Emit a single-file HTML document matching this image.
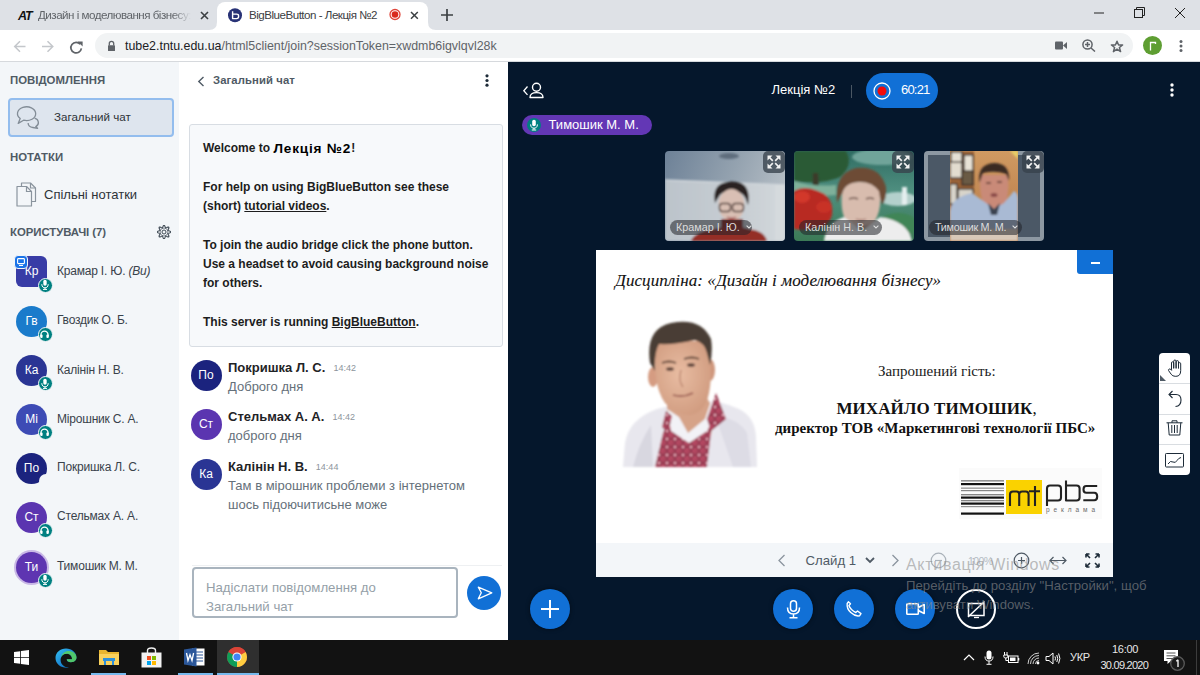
<!DOCTYPE html>
<html><head><meta charset="utf-8">
<style>
*{margin:0;padding:0;box-sizing:border-box}
html,body{width:1200px;height:675px;overflow:hidden;font-family:"Liberation Sans",sans-serif;background:#fff}
.a{position:absolute}
svg{display:block;position:absolute}
.nw{white-space:nowrap}
.sec{font-size:11.4px;font-weight:bold;color:#4f5a65;white-space:nowrap;line-height:14px}
.uname{font-size:12px;letter-spacing:-0.2px;color:#39424b;white-space:nowrap;line-height:14px}
.av{position:absolute;width:31px;height:31px;border-radius:50%;color:#fff;font-size:12px;text-align:center;line-height:31px}
.badge{position:absolute;width:15px;height:15px;border-radius:50%;background:#008081;border:1.5px solid #f3f6f9}
.wel{position:absolute;left:203px;font-size:12px;font-weight:bold;color:#1d1d1d;white-space:nowrap;line-height:14px}
.mname{position:absolute;left:228px;font-size:13px;font-weight:bold;color:#1f2326;white-space:nowrap;line-height:15px}
.mtime{font-size:9px;font-weight:normal;color:#8d959d;margin-left:2px;position:relative;top:-1px}
.mtxt{position:absolute;left:228px;font-size:13px;color:#65707a;white-space:nowrap;line-height:15px}
.tile{position:absolute;top:151px;width:120px;height:90px;border-radius:4px;overflow:hidden}
.exp{position:absolute;right:0;top:0;width:22px;height:22px;border-radius:5px;background:rgba(55,65,75,.78)}
.tname{position:absolute;left:5px;top:69px;height:15px;border-radius:8px;background:rgba(32,34,40,.55);color:#dcdcdc;font-size:10.8px;line-height:15px;padding:0 6px;white-space:nowrap}
.abtn{position:absolute;top:589px;width:40px;height:40px;border-radius:50%;background:#1170d6;box-shadow:0 0 4px rgba(0,0,0,.5)}
</style></head><body>

<!-- ============ TAB STRIP ============ -->
<div class="a" style="left:0;top:0;width:1200px;height:30px;background:#dee1e6"></div>
<div class="a" style="left:217px;top:2px;width:211px;height:29px;background:#fff;border-radius:8px 8px 0 0"></div>
<svg style="left:209px;top:22px" width="8" height="8"><path d="M0 8 Q8 8 8 0 L8 8Z" fill="#fff"/></svg>
<svg style="left:428px;top:22px" width="8" height="8"><path d="M8 8 Q0 8 0 0 L0 8Z" fill="#fff"/></svg>
<div class="a nw" style="left:18px;top:9px;font:italic bold 12.5px 'Liberation Sans';color:#111;letter-spacing:-1.2px">AT</div>
<div class="a nw" style="left:38px;top:8px;font-size:11.6px;letter-spacing:-0.5px;color:#5f6368;width:153px;overflow:hidden;-webkit-mask-image:linear-gradient(90deg,#000 88%,transparent)">Дизайн і моделювання бізнесу:</div>
<svg style="left:200px;top:11px" width="9" height="9"><path d="M1 1L8 8M8 1L1 8" stroke="#3c4043" stroke-width="1.6"/></svg>
<svg style="left:227.5px;top:7.5px" width="15" height="15"><circle cx="7" cy="7.2" r="7" fill="#283276"/><path d="M4.6 3.3V10.6H8.6Q10.6 10.6 10.6 8.6V8Q10.6 6.1 8.6 6.1H4.6" fill="none" stroke="#fff" stroke-width="1.4" stroke-linejoin="round"/></svg>
<div class="a nw" style="left:249px;top:8px;font-size:11.6px;letter-spacing:-0.5px;color:#3c4043">BigBlueButton - Лекція №2</div>
<svg style="left:388.5px;top:8.2px" width="13" height="13"><circle cx="6" cy="6.5" r="5" fill="#fff" stroke="#e0453a" stroke-width="1.3"/><circle cx="6" cy="6.5" r="3.3" fill="#d92a1e"/></svg>
<svg style="left:409.5px;top:10.5px" width="9" height="9"><path d="M1 1L7.8 7.8M7.8 1L1 7.8" stroke="#3c4043" stroke-width="1.5"/></svg>
<svg style="left:441px;top:9px" width="12" height="12"><path d="M6 0V12M0 6H12" stroke="#3c4043" stroke-width="1.7"/></svg>
<svg style="left:1094px;top:12px" width="10" height="2"><path d="M0 1H10" stroke="#222" stroke-width="1"/></svg>
<svg style="left:1134px;top:7px" width="11" height="11"><path d="M2.5 2.5V0.5H10.5V8.5H8.5" fill="none" stroke="#222"/><rect x="0.5" y="2.5" width="8" height="8" fill="none" stroke="#222"/></svg>
<svg style="left:1175px;top:8px" width="10" height="10"><path d="M0 0L10 10M10 0L0 10" stroke="#222" stroke-width="1"/></svg>

<!-- ============ TOOLBAR ============ -->
<div class="a" style="left:0;top:30px;width:1200px;height:31px;background:#fff"></div>
<div class="a" style="left:0;top:61px;width:1200px;height:1px;background:#d6d9dd"></div>
<div class="a" style="left:95px;top:33px;width:1038px;height:25px;border-radius:13px;background:#f1f3f4"></div>
<svg style="left:12.5px;top:40px" width="14" height="13"><path d="M12.5 6.5H2M7 1.2L1.7 6.5L7 11.8" fill="none" stroke="#c4c7cb" stroke-width="1.5"/></svg>
<svg style="left:40.5px;top:40px" width="14" height="13"><path d="M1 6.5H11.5M6.5 1.2L11.8 6.5L6.5 11.8" fill="none" stroke="#c4c7cb" stroke-width="1.5"/></svg>
<svg style="left:68.5px;top:39.5px" width="15" height="15"><path d="M11.3 4.3A5.3 5.3 0 1 0 12.4 8.4" fill="none" stroke="#5f6368" stroke-width="1.7"/><path d="M8.6 1.5H13.6V6.5Z" fill="#5f6368"/></svg>
<svg style="left:106.5px;top:39.5px" width="9" height="12"><path d="M2.3 5.5V3.6A2.2 2.2 0 0 1 6.7 3.6V5.5" fill="none" stroke="#5f6368" stroke-width="1.3"/><rect x="1" y="5.2" width="7" height="5.8" rx="0.6" fill="#5f6368"/></svg>
<div class="a nw" style="left:125px;top:39px;font-size:12.4px;color:#202124;line-height:15px">tube2.tntu.edu.ua<span style="color:#5f6368">/html5client/join?sessionToken=xwdmb6igvlqvl28k</span></div>
<svg style="left:1055px;top:41px" width="12" height="9"><rect x="0" y="0.5" width="8" height="8" rx="1" fill="#5f6368"/><path d="M8 4.5L12 1V8Z" fill="#5f6368"/></svg>
<svg style="left:1082px;top:39px" width="14" height="13"><circle cx="5.5" cy="5.5" r="4.6" fill="none" stroke="#5f6368" stroke-width="1.5"/><path d="M9 9L13 12.5M5.5 3V8M3 5.5H8" stroke="#5f6368" stroke-width="1.5"/></svg>
<svg style="left:1110px;top:40px" width="14" height="13"><path d="M7 1.2L8.6 5H12.6L9.4 7.5L10.6 11.6L7 9.2L3.4 11.6L4.6 7.5L1.4 5H5.4Z" fill="none" stroke="#5f6368" stroke-width="1.5" stroke-linejoin="round"/></svg>
<div class="a" style="left:1143px;top:36px;width:19px;height:19px;border-radius:50%;background:#5e9e32"></div>
<svg style="left:1149px;top:41px" width="8" height="10"><path d="M1.5 9.5V1.5H6.5V3" fill="none" stroke="#fff" stroke-width="1.3"/></svg>
<svg style="left:1179px;top:40px" width="4" height="12"><circle cx="2" cy="1.6" r="1.5" fill="#5f6368"/><circle cx="2" cy="6" r="1.5" fill="#5f6368"/><circle cx="2" cy="10.4" r="1.5" fill="#5f6368"/></svg>

<!-- ============ LEFT PANEL ============ -->
<div class="a" style="left:0;top:62px;width:179px;height:578px;background:#f3f6f9"></div>
<div class="a sec" style="left:10px;top:73px">ПОВІДОМЛЕННЯ</div>
<div class="a" style="left:8px;top:98px;width:166px;height:39px;background:#dee5ee;border:2px solid #93bdee;border-radius:4px"></div>
<svg style="left:15px;top:105px" width="25" height="25"><g fill="none" stroke="#838d97" stroke-width="1.3" stroke-linejoin="round"><path d="M5.2 13.6A9.1 6.9 0 1 1 8.6 15.2L3.2 18.4Z"/><path d="M19.6 13.1A5.4 4.7 0 0 1 20.8 21.6L22.6 23.3L17.9 22.5A5.4 4.7 0 0 1 13.1 18"/></g></svg>
<div class="a nw" style="left:54px;top:110px;font-size:11.6px;color:#2e3338;line-height:14px">Загальний чат</div>
<div class="a sec" style="left:10px;top:150px">НОТАТКИ</div>
<svg style="left:16px;top:181.5px" width="21" height="25"><path d="M5.5 4.5V1H14.5L19.5 6V19.5H15.5" fill="none" stroke="#8a949e" stroke-width="1.2" stroke-linejoin="round"/><path d="M14.5 1V6H19.5" fill="none" stroke="#8a949e" stroke-width="1.2"/><path d="M1 4.5H10.5L15.5 9.5V24H1Z" fill="none" stroke="#8a949e" stroke-width="1.2" stroke-linejoin="round"/><path d="M10.5 4.5V9.5H15.5" fill="none" stroke="#8a949e" stroke-width="1.2"/></svg>
<div class="a nw" style="left:44px;top:187px;font-size:13px;color:#2e3338;line-height:15px">Спільні нотатки</div>
<div class="a sec" style="left:10px;top:225px;letter-spacing:-0.05px">КОРИСТУВАЧІ (7)</div>
<svg style="left:157px;top:225.2px" width="14" height="14"><path d="M13.70 7.00 L13.58 7.34 L13.24 7.66 L12.73 7.91 L12.15 8.09 L11.59 8.23 L11.14 8.34 L10.85 8.48 L10.77 8.68 L10.87 8.97 L11.11 9.38 L11.41 9.87 L11.69 10.41 L11.87 10.95 L11.90 11.41 L11.74 11.74 L11.41 11.90 L10.95 11.87 L10.41 11.69 L9.87 11.41 L9.38 11.11 L8.97 10.87 L8.68 10.77 L8.48 10.85 L8.34 11.14 L8.23 11.59 L8.09 12.15 L7.91 12.73 L7.66 13.24 L7.34 13.58 L7.00 13.70 L6.66 13.58 L6.34 13.24 L6.09 12.73 L5.91 12.15 L5.77 11.59 L5.66 11.14 L5.52 10.85 L5.32 10.77 L5.03 10.87 L4.63 11.11 L4.13 11.41 L3.59 11.69 L3.05 11.87 L2.59 11.90 L2.26 11.74 L2.10 11.41 L2.13 10.95 L2.31 10.41 L2.59 9.87 L2.89 9.38 L3.13 8.97 L3.23 8.68 L3.15 8.48 L2.86 8.34 L2.41 8.23 L1.85 8.09 L1.27 7.91 L0.76 7.66 L0.42 7.34 L0.30 7.00 L0.42 6.66 L0.76 6.34 L1.27 6.09 L1.85 5.91 L2.41 5.77 L2.86 5.66 L3.15 5.52 L3.23 5.32 L3.13 5.03 L2.89 4.63 L2.59 4.13 L2.31 3.59 L2.13 3.05 L2.10 2.59 L2.26 2.26 L2.59 2.10 L3.05 2.13 L3.59 2.31 L4.13 2.59 L4.62 2.89 L5.03 3.13 L5.32 3.23 L5.52 3.15 L5.66 2.86 L5.77 2.41 L5.91 1.85 L6.09 1.27 L6.34 0.76 L6.66 0.42 L7.00 0.30 L7.34 0.42 L7.66 0.76 L7.91 1.27 L8.09 1.85 L8.23 2.41 L8.34 2.86 L8.48 3.15 L8.68 3.23 L8.97 3.13 L9.38 2.89 L9.87 2.59 L10.41 2.31 L10.95 2.13 L11.41 2.10 L11.74 2.26 L11.90 2.59 L11.87 3.05 L11.69 3.59 L11.41 4.13 L11.11 4.63 L10.87 5.03 L10.77 5.32 L10.85 5.52 L11.14 5.66 L11.59 5.77 L12.15 5.91 L12.73 6.09 L13.24 6.34 L13.58 6.66Z" fill="none" stroke="#3f4a55" stroke-width="1.1"/><path d="M10.60 8.49 L8.49 10.60 L5.51 10.60 L3.40 8.49 L3.40 5.51 L5.51 3.40 L8.49 3.40 L10.60 5.51Z" fill="none" stroke="#4f5a65" stroke-width="0.7" opacity="0.7"/><circle cx="7" cy="7" r="2" fill="none" stroke="#3f4a55" stroke-width="1"/></svg>

<!-- users -->
<div class="av" style="left:16px;top:256.2px;background:#383ca6;border-radius:6px">Кр</div>
<div class="a" style="left:13.5px;top:254.5px;width:14px;height:14px;border-radius:4px;background:#1a73e8;border:1.5px solid #f3f6f9"></div>
<svg style="left:16.5px;top:257.5px" width="8" height="8"><rect x="0.6" y="0.6" width="6.8" height="5" rx="0.8" fill="none" stroke="#fff" stroke-width="1.1"/><path d="M2 7.5H6" stroke="#fff" stroke-width="1"/></svg>
<div class="badge" style="left:37.5px;top:277.5px"><svg style="left:1px;top:0.5px" width="10" height="11"><rect x="3.3" y="0.8" width="3.4" height="6" rx="1.7" fill="#fff"/><path d="M1.8 5.2C1.8 8 3.5 8.8 5 8.8C6.5 8.8 8.2 8 8.2 5.2M5 8.8V10.2M3 10.4H7" fill="none" stroke="#fff" stroke-width="1"/></svg></div>
<div class="a uname" style="left:57px;top:263.7px">Крамар І. Ю. <i style='color:#39424b'>(Ви)</i></div>
<div class="av" style="left:16px;top:305.9px;background:#1a7bcb">Гв</div>
<div class="badge" style="left:37.5px;top:327.2px"><svg style="left:0.5px;top:1px" width="11" height="10"><path d="M2 7.5V5.6A3.5 3.5 0 0 1 9 5.6V7.5" fill="none" stroke="#fff" stroke-width="1.3"/><rect x="1.2" y="5.6" width="2.4" height="3.4" rx="1" fill="#fff"/><rect x="7.4" y="5.6" width="2.4" height="3.4" rx="1" fill="#fff"/></svg></div>
<div class="a uname" style="left:57px;top:313.4px">Гвоздик О. Б.</div>
<div class="av" style="left:16px;top:355.0px;background:#2a3594">Ка</div>
<div class="badge" style="left:37.5px;top:376.3px"><svg style="left:1px;top:0.5px" width="10" height="11"><rect x="3.3" y="0.8" width="3.4" height="6" rx="1.7" fill="#fff"/><path d="M1.8 5.2C1.8 8 3.5 8.8 5 8.8C6.5 8.8 8.2 8 8.2 5.2M5 8.8V10.2M3 10.4H7" fill="none" stroke="#fff" stroke-width="1"/></svg></div>
<div class="a uname" style="left:57px;top:362.5px">Калінін Н. В.</div>
<div class="av" style="left:16px;top:404.0px;background:#3d4bb5">Мі</div>
<div class="badge" style="left:37.5px;top:425.3px"><svg style="left:0.5px;top:1px" width="11" height="10"><path d="M2 7.5V5.6A3.5 3.5 0 0 1 9 5.6V7.5" fill="none" stroke="#fff" stroke-width="1.3"/><rect x="1.2" y="5.6" width="2.4" height="3.4" rx="1" fill="#fff"/><rect x="7.4" y="5.6" width="2.4" height="3.4" rx="1" fill="#fff"/></svg></div>
<div class="a uname" style="left:57px;top:411.5px">Мірошник С. А.</div>
<div class="av" style="left:16px;top:452.8px;background:#1b237e">По</div>
<div class="a" style="left:39px;top:474.3px;width:14px;height:14px;border-radius:50%;background:#f3f6f9"></div>
<div class="a uname" style="left:57px;top:460.3px">Покришка Л. С.</div>
<div class="av" style="left:16px;top:501.7px;background:#5b35b0">Ст</div>
<div class="badge" style="left:37.5px;top:523.0px"><svg style="left:0.5px;top:1px" width="11" height="10"><path d="M2 7.5V5.6A3.5 3.5 0 0 1 9 5.6V7.5" fill="none" stroke="#fff" stroke-width="1.3"/><rect x="1.2" y="5.6" width="2.4" height="3.4" rx="1" fill="#fff"/><rect x="7.4" y="5.6" width="2.4" height="3.4" rx="1" fill="#fff"/></svg></div>
<div class="a uname" style="left:57px;top:509.2px">Стельмах А. А.</div>
<div class="av" style="left:16px;top:551.5px;background:#5e35b1;box-shadow:0 0 0 2px #c9b8e6">Ти</div>
<div class="badge" style="left:37.5px;top:572.8px"><svg style="left:1px;top:0.5px" width="10" height="11"><rect x="3.3" y="0.8" width="3.4" height="6" rx="1.7" fill="#fff"/><path d="M1.8 5.2C1.8 8 3.5 8.8 5 8.8C6.5 8.8 8.2 8 8.2 5.2M5 8.8V10.2M3 10.4H7" fill="none" stroke="#fff" stroke-width="1"/></svg></div>
<div class="a uname" style="left:57px;top:559.0px">Тимошик М. М.</div>
<!-- ============ CHAT PANEL ============ -->
<div class="a" style="left:179px;top:62px;width:329px;height:578px;background:#fff"></div>
<svg style="left:197px;top:76px" width="8" height="11"><path d="M6.5 1L1.8 5.5L6.5 10" fill="none" stroke="#4f5a65" stroke-width="1.4"/></svg>
<div class="a nw" style="left:213px;top:73px;font-size:11.3px;font-weight:bold;color:#4f5a65;line-height:14px;letter-spacing:0.1px">Загальний чат</div>
<svg style="left:485px;top:74px" width="4" height="13"><circle cx="2" cy="1.8" r="1.6" fill="#1d2b38"/><circle cx="2" cy="6.5" r="1.6" fill="#1d2b38"/><circle cx="2" cy="11.2" r="1.6" fill="#1d2b38"/></svg>
<div class="a" style="left:189px;top:124px;width:314px;height:223px;background:#f7f9fb;border:1px solid #d8dde3;border-radius:3px"></div>
<div class="wel" style="top:141px">Welcome to <span style="font-size:13.6px;letter-spacing:0.8px;color:#000;position:relative;top:0.5px">Лекція №2</span>!</div>
<div class="wel" style="top:180px">For help on using BigBlueButton see these</div>
<div class="wel" style="top:199px">(short) <u>tutorial videos</u>.</div>
<div class="wel" style="top:238px">To join the audio bridge click the phone button.</div>
<div class="wel" style="top:257px">Use a headset to avoid causing background noise</div>
<div class="wel" style="top:276px">for others.</div>
<div class="wel" style="top:315px">This server is running <u>BigBlueButton</u>.</div>

<div class="av" style="left:190.5px;top:360px;background:#1b237e">По</div>
<div class="mname" style="top:359.5px">Покришка Л. С. <span class="mtime">&nbsp;14:42</span></div>
<div class="mtxt" style="top:379px">Доброго дня</div>
<div class="av" style="left:190.5px;top:409px;background:#5b35b0">Ст</div>
<div class="mname" style="top:409px">Стельмах А. А. <span class="mtime">&nbsp;14:42</span></div>
<div class="mtxt" style="top:428px">доброго дня</div>
<div class="av" style="left:190.5px;top:459px;background:#2a3594">Ка</div>
<div class="mname" style="top:458.5px">Калінін Н. В. <span class="mtime">&nbsp;14:44</span></div>
<div class="mtxt" style="top:478px">Там в мірошник проблеми з інтернетом</div>
<div class="mtxt" style="top:496.5px">шось підоючитисьне може</div>

<div class="a" style="left:192px;top:565px;width:310px;height:1px;background:#eef0f2"></div>
<div class="a" style="left:192px;top:567px;width:266px;height:51px;border:2px solid #a9b4be;border-radius:4px;background:#fff"></div>
<div class="a nw" style="left:206px;top:577.5px;font-size:13.2px;color:#959fa8;line-height:19px">Надіслати повідомлення до<br>Загальний чат</div>
<div class="a" style="left:467px;top:575.5px;width:34px;height:34px;border-radius:50%;background:#1170d6"></div>
<svg style="left:476.5px;top:585.5px" width="16" height="14"><path d="M1.3 1.2L14.8 6.8L1.3 12.8L4.3 6.8Z" fill="none" stroke="#fff" stroke-width="1.3" stroke-linejoin="round"/></svg>

<!-- ============ MAIN ============ -->
<div class="a" style="left:508px;top:62px;width:692px;height:578px;background:#05172c"></div>
<svg style="left:522px;top:82px" width="23" height="17"><path d="M5.5 4.5L1.8 8.7L5.5 12.9" fill="none" stroke="#fff" stroke-width="1.3"/><circle cx="14.5" cy="5.2" r="4" fill="none" stroke="#fff" stroke-width="1.4"/><path d="M8 15.5C8 12.3 10.8 10.6 14.5 10.6C18.2 10.6 21 12.3 21 15.5Z" fill="none" stroke="#fff" stroke-width="1.4" stroke-linejoin="round"/></svg>
<div class="a nw" style="left:771.5px;top:82px;font-size:13px;color:#fff;line-height:16px">Лекція №2</div>
<div class="a" style="left:850.5px;top:85px;width:1px;height:13px;background:#4b5763"></div>
<div class="a" style="left:866px;top:73px;width:72px;height:35px;border-radius:18px;background:#1170d6"></div>
<svg style="left:873px;top:82px" width="18" height="18"><circle cx="9" cy="9" r="8" fill="none" stroke="#fff" stroke-width="1.3"/><circle cx="9" cy="9" r="4.5" fill="#f20b0b"/></svg>
<div class="a nw" style="left:901px;top:82px;font-size:13px;letter-spacing:-0.8px;color:#fff;line-height:16px">60:21</div>
<svg style="left:1170px;top:83px" width="4" height="14"><circle cx="2" cy="2" r="1.7" fill="#fff"/><circle cx="2" cy="7" r="1.7" fill="#fff"/><circle cx="2" cy="12" r="1.7" fill="#fff"/></svg>

<div class="a" style="left:521.5px;top:115px;width:130px;height:20px;border-radius:10px;background:#6337b5"></div>
<div class="a" style="left:527px;top:118px;width:14px;height:14px;border-radius:50%;background:#008081"></div>
<svg style="left:529px;top:119px" width="10" height="12"><rect x="3.2" y="0.8" width="3.6" height="6.4" rx="1.8" fill="#fff"/><path d="M1.6 5.4C1.6 8.4 3.4 9.2 5 9.2C6.6 9.2 8.4 8.4 8.4 5.4M5 9.2V10.8M2.8 11H7.2" fill="none" stroke="#fff" stroke-width="1"/></svg>
<div class="a nw" style="left:548.5px;top:117px;font-size:13px;color:#fff;line-height:16px">Тимошик М. М.</div>

<!-- ============ WEBCAMS ============ -->
<div class="tile" style="left:665px">
<svg style="left:0;top:0" width="120" height="90"><defs><filter id="b1"><feGaussianBlur stdDeviation="1.3"/></filter>
<linearGradient id="g1" x1="0" y1="0" x2="1" y2="0.3"><stop offset="0" stop-color="#6d8197"/><stop offset="0.6" stop-color="#95a3b0"/><stop offset="1" stop-color="#b3bcc4"/></linearGradient>
<linearGradient id="w1" x1="0" y1="0" x2="1" y2="0"><stop offset="0" stop-color="#bcc4cb"/><stop offset="0.7" stop-color="#c9cfd4"/><stop offset="1" stop-color="#d3d8dc"/></linearGradient></defs>
<rect width="120" height="90" fill="url(#g1)"/>
<g filter="url(#b1)">
<path d="M0 29L120 34V90H0Z" fill="url(#w1)"/>
<path d="M0 29L120 34" stroke="#d0d6db" stroke-width="1.5" fill="none"/>
<rect x="110" y="34" width="10" height="56" fill="#d5dadd"/>
<ellipse cx="64" cy="5" rx="10" ry="3" fill="#5e6d7d"/>
<path d="M50 52Q47 36 58 32Q67 29 76 32Q86 37 83 54L80 46Q76 40 66 40Q56 40 53 47Z" fill="#2a2322"/>
<ellipse cx="66.5" cy="54" rx="13" ry="16" fill="#d9bfb4"/>
<path d="M53 47Q56 38 66 37Q77 37 80 47L79 40Q74 33 66 33Q57 33 53 41Z" fill="#2a2322"/>
<rect x="54.5" y="52.5" width="11" height="8" rx="3" fill="none" stroke="#4a3832" stroke-width="1.4"/>
<rect x="67.5" y="52.5" width="11" height="8" rx="3" fill="none" stroke="#4a3832" stroke-width="1.4"/>
<path d="M62 66Q66.5 68.5 71 66" stroke="#a86060" stroke-width="1.4" fill="none"/>
<path d="M56 68H78V80H56Z" fill="#8e2c24"/>
<path d="M26 90Q30 80 50 78L58 76H76L84 78Q100 80 102 90Z" fill="#942e26"/>
</g></svg>
<div class="exp"><svg style="right:4px;top:4px" width="14" height="14"><g fill="#f2f2f2"><path d="M0.5 0.5H5.5L0.5 5.5Z"/><path d="M13.5 0.5H8.5L13.5 5.5Z"/><path d="M0.5 13.5H5.5L0.5 8.5Z"/><path d="M13.5 13.5H8.5L13.5 8.5Z"/></g><path d="M2.5 2.5L5.8 5.8M11.5 2.5L8.2 5.8M2.5 11.5L5.8 8.2M11.5 11.5L8.2 8.2" stroke="#f2f2f2" stroke-width="1.7"/></svg></div>
<div class="tname" style="width:82px">Крамар І. Ю. <svg style="position:relative;display:inline-block;vertical-align:middle;margin-left:3px;top:-1px" width="6" height="4"><path d="M0.6 0.6L3 3L5.4 0.6" fill="none" stroke="#dcdcdc" stroke-width="1.1"/></svg></div>
</div>

<div class="tile" style="left:794px">
<svg style="left:0;top:0" width="120" height="90"><defs><filter id="b2"><feGaussianBlur stdDeviation="1.2"/></filter>
<linearGradient id="g2" x1="0" y1="0" x2="0" y2="1"><stop offset="0" stop-color="#2f6c62"/><stop offset="0.45" stop-color="#4f8f80"/><stop offset="1" stop-color="#3c7a56"/></linearGradient></defs>
<rect width="120" height="90" fill="url(#g2)"/>
<g filter="url(#b2)">
<ellipse cx="88" cy="6" rx="30" ry="8" fill="#6fa49a"/>
<path d="M0 0H52Q60 14 46 26Q28 34 0 30Z" fill="#2b5a36"/>
<path d="M19 22L24 22L26 56L18 56Z" fill="#3b3a2c"/>
<path d="M0 30Q18 36 42 34L42 44Q20 46 0 42Z" fill="#7fb09a"/>
<ellipse cx="104" cy="48" rx="18" ry="7" fill="#b4d0cc"/>
<rect x="108" y="36" width="5" height="18" fill="#e4eeee"/>
<path d="M0 40Q10 34 24 40Q36 44 38 56Q40 70 28 76Q12 80 0 78Z" fill="#b82a24"/>
<ellipse cx="8" cy="46" rx="8" ry="6" fill="#d2382c"/>
<ellipse cx="30" cy="56" rx="8" ry="6" fill="#c83028"/>
<ellipse cx="104" cy="74" rx="20" ry="12" fill="#3f8556"/>
<circle cx="88" cy="80" r="3" fill="#c0302a"/>
<path d="M43 52Q40 22 62 17Q86 14 92 36Q93 48 88 54L84 40Q78 32 66 31Q52 32 48 42Z" fill="#6d4c36"/>
<path d="M48 42Q46 64 54 72Q62 78 68 78Q78 76 83 66Q88 54 85 40Q78 31 66 31Q52 31 48 42Z" fill="#d8bcae"/>
<path d="M48 44Q50 30 66 30Q80 30 86 42L84 34Q76 24 64 25Q50 27 48 36Z" fill="#6d4c36"/>
<path d="M55 48Q60 46 64 48M72 48Q76 46 80 48" stroke="#6a5048" stroke-width="1.5" fill="none"/>
<path d="M62 68Q67 70 72 68" stroke="#a07068" stroke-width="1.3" fill="none"/>
<path d="M56 74Q68 80 80 72" stroke="#8a6050" stroke-width="2" fill="none" opacity="0.5"/>
<path d="M30 90Q32 72 50 66L68 80L86 66Q114 70 118 90Z" fill="#ededed"/>
</g></svg>
<div class="exp"><svg style="right:4px;top:4px" width="14" height="14"><g fill="#f2f2f2"><path d="M0.5 0.5H5.5L0.5 5.5Z"/><path d="M13.5 0.5H8.5L13.5 5.5Z"/><path d="M0.5 13.5H5.5L0.5 8.5Z"/><path d="M13.5 13.5H8.5L13.5 8.5Z"/></g><path d="M2.5 2.5L5.8 5.8M11.5 2.5L8.2 5.8M2.5 11.5L5.8 8.2M11.5 11.5L8.2 8.2" stroke="#f2f2f2" stroke-width="1.7"/></svg></div>
<div class="tname" style="width:83px">Калінін Н. В. <svg style="position:relative;display:inline-block;vertical-align:middle;margin-left:3px;top:-1px" width="6" height="4"><path d="M0.6 0.6L3 3L5.4 0.6" fill="none" stroke="#dcdcdc" stroke-width="1.1"/></svg></div>
</div>

<div class="tile" style="left:924px;background:#8d98a2">
<div class="a" style="left:4px;top:4px;width:112px;height:82px;background:#4b5866"></div>
<svg style="left:26px;top:0" width="68" height="90"><defs><filter id="b3"><feGaussianBlur stdDeviation="1.1"/></filter>
<linearGradient id="br" x1="0" y1="0" x2="0" y2="1"><stop offset="0" stop-color="#d09a62"/><stop offset="1" stop-color="#b47644"/></linearGradient></defs>
<rect width="68" height="90" fill="url(#br)"/>
<g filter="url(#b3)">
<path d="M0 0H24V60H0Z" fill="#9a6438"/>
<rect x="1" y="1" width="11" height="14" fill="#e6e0d4" stroke="#2a2420" stroke-width="1.2"/>
<rect x="14" y="4" width="9" height="17" fill="#e8e2d6" stroke="#2a2420" stroke-width="1.2"/>
<rect x="0" y="11" width="12" height="16" fill="#e2dccf" stroke="#2a2420" stroke-width="1.2"/>
<rect x="12" y="20" width="11" height="14" fill="#6b5a45" stroke="#2a2420" stroke-width="1.2"/>
<rect x="0" y="33" width="7" height="20" fill="#d8d4ca" stroke="#2a2420" stroke-width="1.2"/>
<rect x="8" y="38" width="15" height="16" fill="#d8d4ca" stroke="#2a2420" stroke-width="1.2"/>
<path d="M60 0H68V8Z" fill="#e8d068"/>
<path d="M30 24Q29 52 38 56Q46 60 52 56Q60 50 58 24Z" fill="#c98a78"/>
<path d="M29.5 32Q27 13 44 12Q60 12 59 30L56 23Q46 19 33 22Z" fill="#3a2c24"/>
<path d="M36 32H41M47 31H52" stroke="#5a3a32" stroke-width="1.4"/>
<ellipse cx="44" cy="44" rx="3.5" ry="2" fill="#8a4a48"/>
<path d="M0 60Q2 46 22 42L36 52L44 58L54 52L64 40Q68 42 68 48V90H0Z" fill="#a9bad4"/>
<path d="M38 52L44 58L50 52L47 64H41Z" fill="#3a4250"/>
<path d="M0 78H68V90H0Z" fill="#d8c8b8"/>
</g></svg>
<div class="exp"><svg style="right:4px;top:4px" width="14" height="14"><g fill="#f2f2f2"><path d="M0.5 0.5H5.5L0.5 5.5Z"/><path d="M13.5 0.5H8.5L13.5 5.5Z"/><path d="M0.5 13.5H5.5L0.5 8.5Z"/><path d="M13.5 13.5H8.5L13.5 8.5Z"/></g><path d="M2.5 2.5L5.8 5.8M11.5 2.5L8.2 5.8M2.5 11.5L5.8 8.2M11.5 11.5L8.2 8.2" stroke="#f2f2f2" stroke-width="1.7"/></svg></div>
<div class="tname" style="width:93px;letter-spacing:-0.3px">Тимошик М. М. <svg style="position:relative;display:inline-block;vertical-align:middle;margin-left:3px;top:-1px" width="6" height="4"><path d="M0.6 0.6L3 3L5.4 0.6" fill="none" stroke="#dcdcdc" stroke-width="1.1"/></svg></div>
</div>

<!-- ============ PRESENTATION ============ -->
<div class="a" style="left:596px;top:250px;width:517px;height:293px;background:#fff"></div>
<div class="a nw" style="left:615px;top:270.5px;font:italic 17px 'Liberation Serif';letter-spacing:0.08px;color:#111;line-height:20px;-webkit-text-stroke:0.1px #111">Дисципліна: «Дизайн і моделювання бізнесу»</div>
<div class="a" style="left:1077px;top:250px;width:36px;height:24px;background:#1170d6;border-radius:0 0 0 3px"></div>
<div class="a" style="left:1091px;top:262px;width:9px;height:1.5px;background:#fff"></div>

<svg style="left:615px;top:315px" width="150" height="157"><defs><filter id="bp"><feGaussianBlur stdDeviation="0.8"/></filter>
<pattern id="emb" width="8" height="8" patternUnits="userSpaceOnUse"><rect width="8" height="8" fill="#b84a64"/><path d="M4 0.6L7.4 4L4 7.4L0.6 4Z" fill="none" stroke="#5e2838" stroke-width="1"/><circle cx="4" cy="4" r="1" fill="#f0d0da"/><circle cx="0" cy="0" r="1" fill="#4a2030"/></pattern>
<radialGradient id="skin" cx="0.45" cy="0.45" r="0.6"><stop offset="0" stop-color="#e8bca2"/><stop offset="1" stop-color="#d19c80"/></radialGradient></defs>
<g filter="url(#bp)">
<path d="M8 152L10 128Q14 104 42 94L76 86Q104 84 124 94Q140 102 141 122L142 152Z" fill="#e8e7ee"/>
<path d="M18 152Q24 128 36 110L38 152Z" fill="#d8d7e0"/>
<path d="M100 100Q124 104 132 118L136 152H118Z" fill="#dddce5"/>
<path d="M52 104L52 82L90 80L100 96L96 120L74 132L58 120Z" fill="#d6a388"/>
<path d="M40 152L48 118L54 104L62 110L72 124L88 112L98 100L92 152Z" fill="url(#emb)"/>
<path d="M56 116L52 94L64 102L73 118L90 104L96 86L103 96L92 116L74 128Z" fill="#f2f2f6"/>
<path d="M92 104L101 78L111 104L96 116Z" fill="url(#emb)"/>
<path d="M47 112L51 96L57 101L53 118Z" fill="url(#emb)"/>
<ellipse cx="38" cy="62" rx="5" ry="10" fill="#d59c82"/>
<ellipse cx="95" cy="55" rx="5" ry="11" fill="#cf967c"/>
<path d="M40 26Q37 70 50 88Q62 100 74 100Q90 98 94 78Q98 58 94 26Z" fill="url(#skin)"/>
<path d="M35 48Q30 14 56 8Q86 2 96 24Q98 36 95 50L92 38Q90 28 80 25Q60 30 44 29Q39 38 40 56Z" fill="#4a3d34"/>
<path d="M47 48Q54 45 61 48M69 44Q77 41 84 44" stroke="#5a4034" stroke-width="1.8" fill="none"/>
<ellipse cx="55" cy="54" rx="4" ry="1.8" fill="#5a4038"/>
<ellipse cx="76" cy="50" rx="4" ry="1.8" fill="#5a4038"/>
<path d="M66 55Q63 66 68 72" stroke="#bb8670" stroke-width="1.3" fill="none"/>
<path d="M58 80Q68 83 78 78" stroke="#9a5a50" stroke-width="1.6" fill="none"/>
</g></svg>
<div class="a nw" style="left:878px;top:362px;font:15px 'Liberation Serif';color:#1a1a1a;line-height:18px">Запрошений гість:</div>
<div class="a nw" style="left:836.5px;top:399px;font:bold 17px 'Liberation Serif';color:#111;line-height:20px;letter-spacing:0.05px">МИХАЙЛО ТИМОШИК<span style="font-weight:normal">,</span></div>
<div class="a nw" style="left:775px;top:419px;font:bold 15px 'Liberation Serif';color:#111;line-height:18px">директор ТОВ «Маркетингові технології ПБС»</div>

<div class="a" style="left:959px;top:468px;width:143px;height:51px;background:#fbfbfb"></div>
<svg style="left:961px;top:480px" width="44" height="35"><g fill="#111"><rect y="0" width="43" height="1.6" opacity=".45"/><rect y="3" width="43" height="2.2"/><rect y="7.5" width="43" height="1.3" opacity=".45"/><rect y="10" width="43" height="1.2" opacity=".5"/><rect y="14" width="43" height="1.4" opacity=".5"/><rect y="16.5" width="43" height="2.2"/><rect y="20" width="43" height="1.3" opacity=".5"/><rect y="22.5" width="43" height="2.2"/><rect y="26" width="43" height="1.2" opacity=".45"/><rect y="32.5" width="43" height="2.2"/></g></svg>
<div class="a" style="left:1005.5px;top:480px;width:36px;height:34px;background:#fad200"></div>
<svg style="left:1000px;top:475px" width="105" height="45"><g fill="none" stroke="#222" stroke-width="2.1" stroke-linejoin="round">
<path d="M10 31V19.5Q10 16.5 13 16.5H16.5Q19.2 16.5 19.2 19.5V31M19.2 19.5Q19.2 16.5 22.2 16.5H25.8Q28.6 16.5 28.6 19.5V31"/>
<path d="M35 11V31M29 16.3H40"/>
<path d="M47 31V13.5Q47 10.5 50 10.5H58Q61 10.5 61 13.5V22.5Q61 25.5 58 25.5H47"/>
<path d="M66 5.5V25.5H76.5Q79.6 25.5 79.6 22.5V13.5Q79.6 10.5 76.5 10.5H66"/>
<path d="M97.2 11H86.3Q83.5 11 83.5 14.4Q83.5 17.7 86.3 17.7H94.3Q97.2 17.7 97.2 21.5Q97.2 25.2 94.3 25.2H83.3"/>
</g></svg>
<div class="a nw" style="left:1046px;top:506px;font-size:6.5px;letter-spacing:3.9px;color:#6a6a6a;line-height:8px">реклама</div>

<div class="a" style="left:596px;top:543px;width:517px;height:34px;background:#f3f6f9"></div>
<svg style="left:777px;top:554px" width="9" height="13"><path d="M7.5 1L2 6.5L7.5 12" fill="none" stroke="#8a949e" stroke-width="1.3"/></svg>
<div class="a nw" style="left:805.5px;top:553px;font-size:13.2px;color:#4f5a65;line-height:16px">Слайд 1</div>
<svg style="left:865px;top:557px" width="10" height="7"><path d="M1 1L5 5L9 1" fill="none" stroke="#4f5a65" stroke-width="1.8"/></svg>
<svg style="left:891px;top:554px" width="9" height="13"><path d="M1.5 1L7 6.5L1.5 12" fill="none" stroke="#8a949e" stroke-width="1.3"/></svg>
<svg style="left:930px;top:552px" width="17" height="17"><circle cx="8.5" cy="8.5" r="7.3" fill="none" stroke="#aab2ba" stroke-width="1.2"/><path d="M5 8.5H12" stroke="#aab2ba" stroke-width="1.2"/></svg>
<div class="a nw" style="left:968px;top:555px;font-size:10.5px;letter-spacing:-0.6px;color:#b4bcc4;line-height:12px">100%</div>
<svg style="left:1012.5px;top:552px" width="17" height="17"><circle cx="8.5" cy="8.5" r="7.3" fill="none" stroke="#4f5a65" stroke-width="1.2"/><path d="M5 8.5H12M8.5 5V12" stroke="#4f5a65" stroke-width="1.2"/></svg>
<svg style="left:1049px;top:555px" width="18" height="11"><path d="M1 5.5H17M4.5 2L1 5.5L4.5 9M13.5 2L17 5.5L13.5 9" fill="none" stroke="#4f5a65" stroke-width="1.2"/></svg>
<svg style="left:1085px;top:553px" width="15" height="15"><path d="M1 1L5 5M1 1H4.5M1 1V4.5 M14 1L10 5M14 1H10.5M14 1V4.5 M1 14L5 10M1 14H4.5M1 14V10.5 M14 14L10 10M14 14H10.5M14 14V10.5" fill="none" stroke="#1d2b38" stroke-width="1.6"/></svg>

<!-- whiteboard toolbar -->
<div class="a" style="left:1159px;top:353px;width:30.5px;height:122px;background:#fff;border-radius:4px"></div>
<div class="a" style="left:1159px;top:383px;width:30.5px;height:1px;background:#d9dde1"></div>
<div class="a" style="left:1159px;top:414px;width:30.5px;height:1px;background:#d9dde1"></div>
<div class="a" style="left:1159px;top:444px;width:30.5px;height:1px;background:#d9dde1"></div>
<svg style="left:1166.5px;top:358.5px" width="18" height="19"><path d="M4.5 10.5V4Q4.5 2.8 5.6 2.8Q6.7 2.8 6.7 4V9M6.7 9V2.2Q6.7 1 7.9 1Q9.1 1 9.1 2.2V9M9.1 9V2.8Q9.1 1.6 10.3 1.6Q11.5 1.6 11.5 2.8V9M11.5 9V4.8Q11.5 3.6 12.6 3.6Q13.7 3.6 13.7 4.8V11.5Q13.7 17.3 9 17.3H8.2Q5.6 17.3 4.2 15.3L1.6 11.6Q1.1 10.6 2 10.1Q3 9.6 3.8 10.5L4.5 11.3" fill="none" stroke="#1d2b38" stroke-width="1" stroke-linejoin="round" stroke-linecap="round"/></svg>
<svg style="left:1159px;top:374px" width="8" height="8"><path d="M1 1L7 7H1Z" fill="#4f5a65"/></svg>
<svg style="left:1167px;top:389px" width="16" height="19"><path d="M2.5 5.5H9Q14 5.5 14 11Q14 17 8.5 17.5" fill="none" stroke="#1d2b38" stroke-width="1.1"/><path d="M5.5 2L2 5.5L5.5 9" fill="none" stroke="#1d2b38" stroke-width="1.1"/></svg>
<svg style="left:1166px;top:420px" width="17" height="16"><path d="M0.5 2.8H16.5M6 2.8V0.8H11V2.8M2.2 2.8L3.2 15H13.8L14.8 2.8" fill="none" stroke="#1d2b38" stroke-width="1" stroke-linejoin="round"/><path d="M5.8 5V13M8.5 5V13M11.2 5V13" stroke="#1d2b38" stroke-width="1"/></svg>
<svg style="left:1165px;top:452.5px" width="19" height="15"><rect x="0.5" y="0.5" width="18" height="13.5" rx="0.8" fill="none" stroke="#1d2b38" stroke-width="1"/><path d="M3 11Q5.5 7 8 9Q10.5 10.5 12 7.5Q13.5 5 16 4.5" fill="none" stroke="#1d2b38" stroke-width="1"/></svg>

<!-- action bar -->
<div class="abtn" style="left:530px"></div>
<svg style="left:541px;top:600px" width="18" height="18"><path d="M9 0V18M0 9H18" stroke="#fff" stroke-width="2"/></svg>
<div class="abtn" style="left:773px"></div>
<svg style="left:786px;top:600px" width="15" height="19"><rect x="4.5" y="0.8" width="6" height="10.5" rx="3" fill="none" stroke="#fff" stroke-width="1.5"/><path d="M1.5 7.5Q1.5 14 7.5 14Q13.5 14 13.5 7.5M7.5 14V17.5M3.5 17.8H11.5" fill="none" stroke="#fff" stroke-width="1.5"/></svg>
<div class="abtn" style="left:834px"></div>
<svg style="left:845px;top:600px" width="18" height="18"><path d="M2.2 3.5Q1.5 8.5 5.8 12.6Q10 16.6 14.5 15.8L16 13.6L12.5 11L10.8 12.5Q8.6 11.6 6.5 9.6Q4.6 7.6 3.9 5.6L5.5 3.8L3.4 1.8Z" fill="none" stroke="#fff" stroke-width="1.4" stroke-linejoin="round"/></svg>
<div class="abtn" style="left:895px"></div>
<svg style="left:906px;top:603px" width="19" height="12"><rect x="0.8" y="0.8" width="11.5" height="10.4" rx="0.8" fill="none" stroke="#fff" stroke-width="1.6"/><path d="M12.3 4.5L18.2 1.5V10.5L12.3 7.5" fill="none" stroke="#fff" stroke-width="1.6" stroke-linejoin="round"/></svg>
<div class="a" style="left:956px;top:589px;width:40px;height:40px;border-radius:50%;border:2px solid #fff"></div>
<svg style="left:966px;top:600px" width="20" height="19"><path d="M2.5 3.5H18V15.5H2.5Z" fill="none" stroke="#fff" stroke-width="1.5"/><path d="M2 17L18.5 1.5" stroke="#fff" stroke-width="1.5"/><path d="M8 17.5H13" stroke="#fff" stroke-width="1.3"/></svg>

<!-- windows activation watermark -->
<div class="a nw" style="left:906px;top:555px;font-size:16px;letter-spacing:0.7px;color:rgba(145,145,145,.6);line-height:19px">Активація Windows</div>
<div class="a nw" style="left:906px;top:577px;font-size:13.2px;color:rgba(140,140,140,.62);line-height:18.6px">Перейдіть до розділу "Настройки", щоб<br>активувати Windows.</div>

<!-- ============ TASKBAR ============ -->
<div class="a" style="left:0;top:640px;width:1200px;height:35px;background:#121212"></div>
<div class="a" style="left:217px;top:640px;width:42px;height:35px;background:#2f2f2f"></div>
<div class="a" style="left:91px;top:673px;width:35px;height:2px;background:#76b9ed"></div>
<div class="a" style="left:178px;top:673px;width:35px;height:2px;background:#76b9ed"></div>
<div class="a" style="left:217px;top:673px;width:42px;height:2px;background:#76b9ed"></div>
<svg style="left:14px;top:650px" width="15" height="15"><path d="M0 2.1L6.2 1.2V7H0Z M7 1.1L15 0V7H7Z M0 7.8H6.2V13.8L0 12.9Z M7 7.8H15V15L7 13.9Z" fill="#fff"/></svg>
<svg style="left:55px;top:648px" width="22" height="20"><defs><linearGradient id="ed" x1="0" y1="0" x2="1" y2="1"><stop offset="0" stop-color="#35c1f1"/><stop offset="0.5" stop-color="#1c8ad6"/><stop offset="1" stop-color="#0c59a4"/></linearGradient></defs><path d="M11 0.5C16.8 0.5 21.5 4.5 21.5 9.5C21.5 12.6 19 14.2 16 14.2C13 14.2 11.5 13 11.8 11.3H17C17.2 8 14.8 5.8 11.6 5.8C7.6 5.8 5.6 9 5.6 12C5.6 16.2 9.2 19.5 14 19.5C7 20.8 0.5 16.5 0.5 10C0.5 4.5 5.2 0.5 11 0.5Z" fill="url(#ed)"/><path d="M21.5 9.5C21.5 12.6 19 14.2 16 14.2C13.5 14.2 11.8 13 11.8 11.3H17C17.2 8 14.8 5.8 11.6 5.8C8.5 5.8 6.5 7.5 5.9 9.8C7 4.5 11 2.5 14.5 3C18.5 3.5 21.5 6 21.5 9.5Z" fill="#5ad35a" opacity="0.85"/></svg>
<svg style="left:99px;top:649px" width="20" height="17"><path d="M0 1H7L9 3H20V16H0Z" fill="#e8b530"/><path d="M0 5H20V16H0Z" fill="#f9d15c"/><rect x="4" y="9" width="12" height="3" fill="#2d8fd9"/><path d="M6 12V16M14 12V16" stroke="#2d8fd9" stroke-width="2"/></svg>
<svg style="left:141px;top:647px" width="21" height="21"><path d="M6.5 6V3.5Q6.5 1 10.5 1Q14.5 1 14.5 3.5V6" fill="none" stroke="#eee" stroke-width="1.4"/><rect x="0.5" y="5.5" width="20" height="15" fill="#f2f2f2"/><rect x="6" y="9" width="4" height="4" fill="#f25022"/><rect x="11" y="9" width="4" height="4" fill="#7fba00"/><rect x="6" y="14" width="4" height="4" fill="#00a4ef"/><rect x="11" y="14" width="4" height="4" fill="#ffb900"/></svg>
<svg style="left:184px;top:647px" width="21" height="20"><rect x="8" y="1.5" width="12.5" height="17" fill="#fff"/><path d="M11 5H19M11 8H19M11 11H19M11 14H19" stroke="#2b579a" stroke-width="1.2"/><path d="M0 2.5L12.5 0.5V19.5L0 17.5Z" fill="#2b579a"/><path d="M2.5 6L4 13.5L6 7.8L8 13.5L9.6 6" fill="none" stroke="#fff" stroke-width="1.3"/></svg>
<svg style="left:227px;top:647px" width="20" height="20"><circle cx="10" cy="10" r="10" fill="#db4437"/><path d="M10 10L18.66 5A10 10 0 0 0 1.34 5Z" fill="#db4437"/><path d="M10 10L1.34 5A10 10 0 0 0 10 20Z" fill="#0f9d58"/><path d="M10 10L10 20A10 10 0 0 0 18.66 5Z" fill="#ffcd40"/><circle cx="10" cy="10" r="4.6" fill="#fff"/><circle cx="10" cy="10" r="3.6" fill="#4285f4"/></svg>

<svg style="left:963px;top:654px" width="12" height="7"><path d="M1 6L6 1L11 6" fill="none" stroke="#fff" stroke-width="1.2"/></svg>
<svg style="left:984px;top:650px" width="10" height="15"><rect x="2.5" y="0.5" width="5" height="9" rx="2.5" fill="#fff"/><path d="M1 6.5Q1 11 5 11Q9 11 9 6.5M5 11V14M2.5 14.3H7.5" fill="none" stroke="#fff" stroke-width="1"/></svg>
<svg style="left:1003px;top:651px" width="17" height="14"><path d="M1.5 1V4M4 1V4M0.8 4H4.7V5.8Q4.7 7 2.8 7Q0.8 7 0.8 5.8Z M2.8 7V9.5H5" fill="none" stroke="#fff" stroke-width="1"/><rect x="5.5" y="5" width="9.5" height="6.5" fill="none" stroke="#fff" stroke-width="1"/><rect x="7" y="6.5" width="5.5" height="3.5" fill="#fff"/><rect x="15" y="7" width="1.3" height="2.5" fill="#fff"/></svg>
<svg style="left:1027px;top:652px" width="13" height="13"><path d="M1 12A11 11 0 0 1 12 1M3.5 12A8.5 8.5 0 0 1 12 3.5M6 12A6 6 0 0 1 12 6M8.5 12A3.5 3.5 0 0 1 12 8.5" fill="none" stroke="#cfcfcf" stroke-width="1"/><circle cx="11" cy="11" r="1.4" fill="#fff"/></svg>
<svg style="left:1045px;top:652px" width="16" height="13"><path d="M1 4.5H4L8 1V12L4 8.5H1Z" fill="none" stroke="#fff" stroke-width="1"/><path d="M10 4.5Q11 6.5 10 8.5M11.8 3Q13.6 6.5 11.8 10M13.6 1.5Q16.2 6.5 13.6 11.5" fill="none" stroke="#fff" stroke-width="1"/></svg>
<div class="a nw" style="left:1070px;top:651px;font-size:11px;color:#e8e8e8;line-height:13px;letter-spacing:-0.3px">УКР</div>
<div class="a nw" style="left:1112px;top:643px;font-size:11px;color:#e8e8e8;line-height:13px;letter-spacing:-0.3px">16:00</div>
<div class="a nw" style="left:1100.5px;top:659px;font-size:11px;color:#e8e8e8;line-height:13px;letter-spacing:-0.75px">30.09.2020</div>
<svg style="left:1163px;top:649px" width="24" height="24"><path d="M1 1H15V12H8L4.5 15V12H1Z" fill="#fff"/><path d="M3.5 4H12.5M3.5 6.8H12.5M3.5 9.5H10" stroke="#555" stroke-width="1"/><circle cx="14.5" cy="14.5" r="6.8" fill="#1a1a1a" stroke="#5a5a5a" stroke-width="1.3"/><path d="M15 10.8V18M13.3 12.3L15 10.8" stroke="#eee" stroke-width="1.4"/></svg><div class="a" style="left:1196px;top:640px;width:1px;height:35px;background:#3c3c3c"></div>

</body></html>
